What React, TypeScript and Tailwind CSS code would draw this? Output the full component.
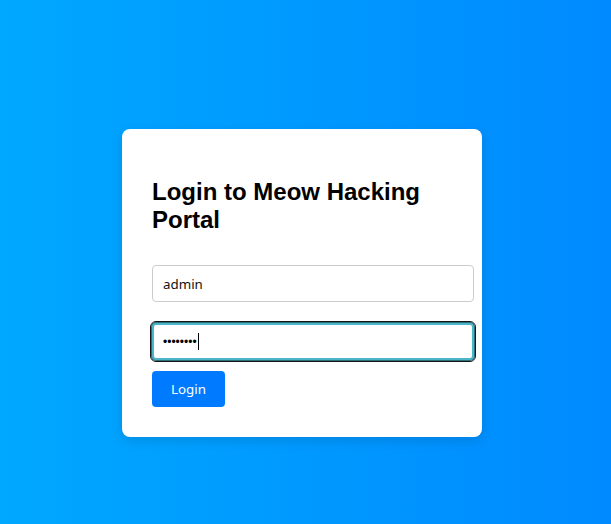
import React from "react";

export default function App() {
  return (
    <div className="min-h-screen w-full bg-[linear-gradient(to_right,#00a8ff,#008aff)] pt-[129px] pl-[122px] font-['Liberation_Sans',Arial,sans-serif]">
      <div className="w-[360px] rounded-[8px] bg-white p-[30px] shadow-[0_4px_12px_rgba(0,0,0,0.12)]">
        <h2 className="mt-[19px] mb-[31px] text-[24px] font-bold leading-[28px] text-black font-['Liberation_Sans',Arial,sans-serif]">
          Login to Meow Hacking Portal
        </h2>
        <form className="flex flex-col" onSubmit={(e) => e.preventDefault()}>
          <input
            type="text"
            readOnly
            value="admin"
            className="box-border h-[37px] w-[322px] rounded-[4px] border border-[#cccccc] bg-white px-[10px] text-[13.33px] text-[#111] outline-none font-['Noto_Sans',sans-serif]"
          />
          <div className="relative mt-[21px] w-[322px]">
            <input
              type="password"
              readOnly
              value="12345678"
              className="box-border block h-[37px] w-[322px] rounded-[4px] border-2 border-[#4cb6c8] bg-white px-[9px] text-[12px] text-black shadow-[0_0_0_1px_#2a6f7a] outline-[1.5px] outline-offset-1 outline-[#141414] outline-solid font-['Liberation_Sans',Arial,sans-serif]"
            />
            <span className="pointer-events-none absolute left-[46px] top-[10px] h-[17px] w-px bg-black" />
          </div>
          <div className="mt-[11px]">
            <button
              type="submit"
              className="h-[36px] w-[73px] rounded-[4px] bg-[#007bff] text-[13.33px] leading-[16px] text-white font-['Noto_Sans',sans-serif]"
            >
              Login
            </button>
          </div>
        </form>
      </div>
    </div>
  );
}
